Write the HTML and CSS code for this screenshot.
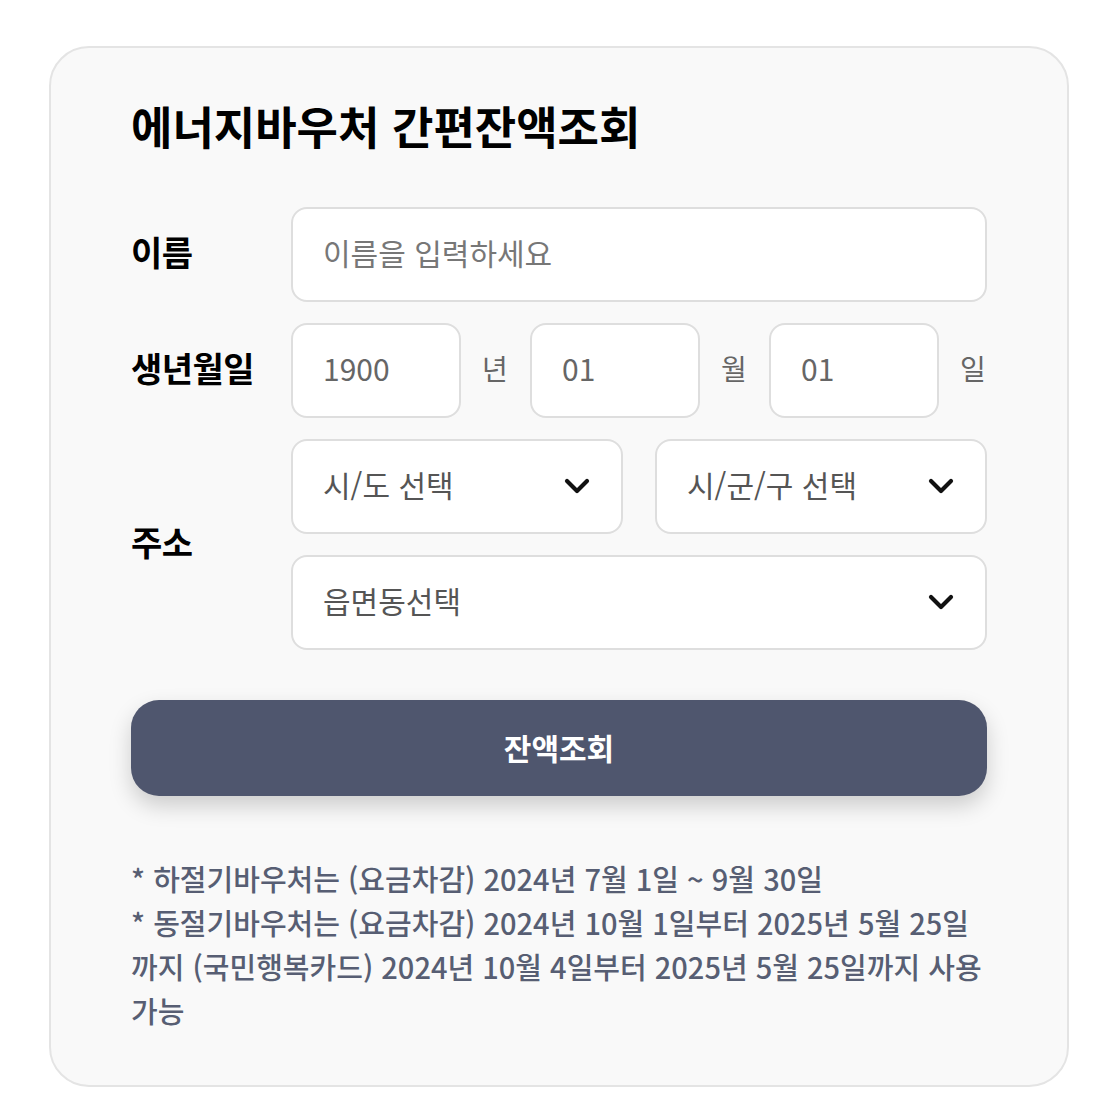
FILE: index.html
```html
<!DOCTYPE html>
<html lang="ko">
<head>
<meta charset="utf-8">
<title>에너지바우처 간편잔액조회</title>
<link rel="stylesheet" href="styles.css">
</head>
<body>
<div class="card">
  <h1 class="title">에너지바우처 간편잔액조회</h1>
  <div class="form">
    <div class="label">이름</div>
    <div class="field">
      <input class="box input" type="text" placeholder="이름을 입력하세요">
    </div>

    <div class="label">생년월일</div>
    <div class="field birth">
      <input class="box input" type="text" value="1900">
      <span class="unit">년</span>
      <input class="box input" type="text" value="01">
      <span class="unit">월</span>
      <input class="box input" type="text" value="01">
      <span class="unit">일</span>
    </div>

    <div class="label">주소</div>
    <div class="field address">
      <div class="select-wrap">
        <select class="box select"><option>시/도 선택</option></select>
        <svg class="chev" width="26" height="16" viewBox="0 0 26 16"><path d="M3 3 L13 13 L23 3" fill="none" stroke="#111" stroke-width="4.2" stroke-linecap="round" stroke-linejoin="round"/></svg>
      </div>
      <div class="select-wrap">
        <select class="box select"><option>시/군/구 선택</option></select>
        <svg class="chev" width="26" height="16" viewBox="0 0 26 16"><path d="M3 3 L13 13 L23 3" fill="none" stroke="#111" stroke-width="4.2" stroke-linecap="round" stroke-linejoin="round"/></svg>
      </div>
      <div class="select-wrap wide">
        <select class="box select"><option>읍면동선택</option></select>
        <svg class="chev" width="26" height="16" viewBox="0 0 26 16"><path d="M3 3 L13 13 L23 3" fill="none" stroke="#111" stroke-width="4.2" stroke-linecap="round" stroke-linejoin="round"/></svg>
      </div>
    </div>
  </div>

  <button class="submit" type="button">잔액조회</button>

  <div class="notes">
    <p>* 하절기바우처는 (요금차감) 2024년 7월 1일 ~ 9월 30일</p>
    <p>* 동절기바우처는 (요금차감) 2024년 10월 1일부터 2025년 5월 25일까지 (국민행복카드) 2024년 10월 4일부터 2025년 5월 25일까지 사용가능</p>
  </div>
</div>
</body>
</html>
```
FILE: styles.css
```css
* { box-sizing: border-box; }
body {
  margin: 0;
  background: #ffffff;
  font-family: "Noto Sans CJK KR", "Noto Sans", sans-serif;
}
.card {
  margin: 46px 0 0 49px;
  width: 1020px;
  border: 2px solid #e4e4e4;
  border-radius: 40px;
  background: #f9f9f9;
  padding: 48px 80px 53px 80px;
}
.title {
  margin: 0;
  font-size: 45px;
  line-height: 60px;
  font-weight: 700;
  color: #000;
  letter-spacing: 0;
}
.form {
  margin-top: 51px;
  display: grid;
  grid-template-columns: 160px 1fr;
  row-gap: 21px;
  align-items: center;
}
.label {
  font-size: 34px;
  font-weight: 700;
  color: #000;
  letter-spacing: -0.5px;
  padding-bottom: 6px;
}
.box {
  height: 95px;
  border: 2px solid #dedede;
  border-radius: 16px;
  background: #fff;
  font-family: "Noto Sans CJK KR", "Noto Sans", sans-serif;
  font-size: 30px;
  outline: none;
}
.input {
  width: 100%;
  padding: 0 30px 6px;
  color: #666;
}
.input::placeholder { color: #777; }
.birth {
  display: flex;
  align-items: center;
  gap: 21px;
}
.birth .input { flex: 1; min-width: 0; }
.unit {
  font-size: 28px;
  color: #666;
  width: 27px;
  flex: none;
  padding-bottom: 6px;
}
.address {
  display: grid;
  grid-template-columns: 1fr 1fr;
  column-gap: 32px;
  row-gap: 21px;
}
.select-wrap {
  position: relative;
}
.select-wrap.wide { grid-column: 1 / 3; }
.select {
  width: 100%;
  appearance: none;
  -webkit-appearance: none;
  padding: 0 30px 6px;
  color: #555;
}
.chev {
  position: absolute;
  right: 33px;
  top: 39px;
  pointer-events: none;
}
.submit {
  display: block;
  width: 100%;
  margin-top: 50px;
  height: 96px;
  border: none;
  border-radius: 28px;
  background: #4f566e;
  color: #fff;
  font-family: "Noto Sans CJK KR", "Noto Sans", sans-serif;
  font-size: 30px;
  font-weight: 700;
  padding-bottom: 4px;
  box-shadow: 0 10px 22px rgba(0, 0, 0, 0.18);
}
.notes {
  margin-top: 60px;
  color: #575e73;
  font-size: 29px;
  font-weight: 500;
  line-height: 44px;
  letter-spacing: 0;
  word-break: break-all;
}
.notes p { margin: 0; }
```
